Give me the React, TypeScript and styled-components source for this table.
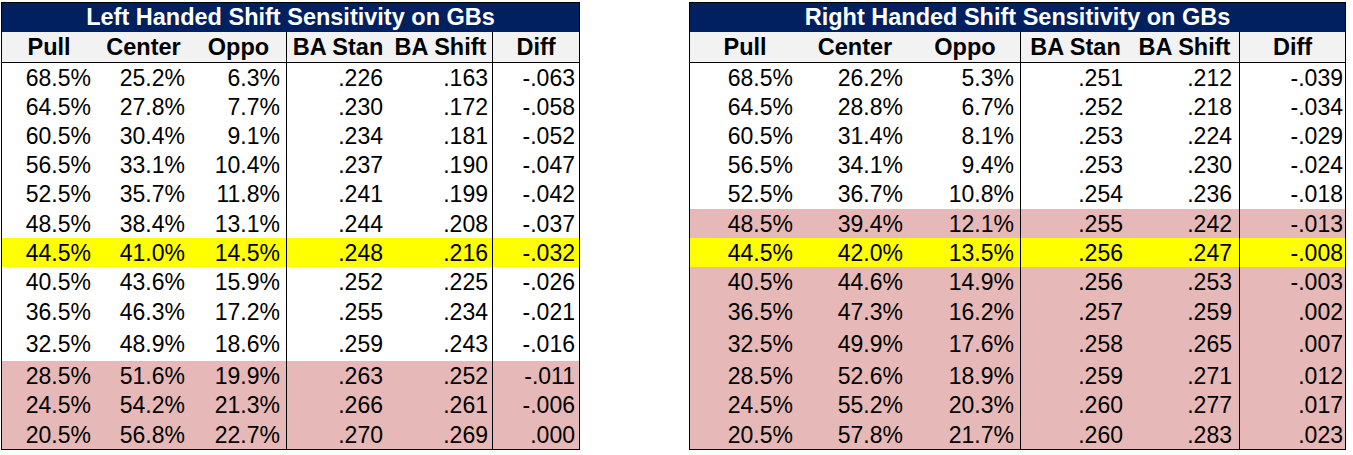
import React from "react";
import styled, { createGlobalStyle } from "styled-components";

const GlobalStyle = createGlobalStyle`
  html, body {
    margin: 0;
    padding: 0;
    background: #ffffff;
  }
  body {
    font-family: "Liberation Sans", Arial, sans-serif;
    color: #000000;
  }
  * { box-sizing: border-box; }
`;

type Fill = "none" | "yellow" | "pink";

const FILL: Record<Fill, string> = {
  none: "#ffffff",
  yellow: "#ffff00",
  pink: "#e6b8b7",
};

const Page = styled.div`
  display: flex;
  align-items: flex-start;
  gap: 109px;
  padding: 2px 0 0 1px;
`;

const Table = styled.div<{ $width: number }>`
  width: ${(p) => p.$width}px;
  border: 1px solid #000000;
  display: flex;
  flex-direction: column;
`;

const Title = styled.div`
  height: 29px;
  background: #002060;
  color: #ffffff;
  font-weight: 700;
  font-size: 23.5px;
  display: flex;
  align-items: center;
  justify-content: center;
  white-space: nowrap;
`;

const Row = styled.div<{ $cols: string; $height: number; $fill: Fill }>`
  display: grid;
  grid-template-columns: ${(p) => p.$cols};
  height: ${(p) => p.$height}px;
  background: ${(p) => FILL[p.$fill]};
`;

const HeaderRow = styled.div<{ $cols: string }>`
  display: grid;
  grid-template-columns: ${(p) => p.$cols};
  height: 31px;
  background: #f2f2f2;
  border-bottom: 1px solid #000000;
`;

const HeadCell = styled.div<{ $sep: boolean }>`
  display: flex;
  align-items: center;
  justify-content: center;
  font-weight: 700;
  font-size: 23.5px;
  padding-top: 1px;
  white-space: nowrap;
  border-right: ${(p) => (p.$sep ? "1px solid #000000" : "none")};
`;

const Cell = styled.div<{ $sep: boolean; $pad: number }>`
  display: flex;
  align-items: center;
  justify-content: flex-end;
  font-size: 23px;
  padding-top: 1px;
  white-space: nowrap;
  padding-right: ${(p) => p.$pad}px;
  border-right: ${(p) => (p.$sep ? "1px solid #000000" : "none")};
`;

const HEADERS = ["Pull", "Center", "Oppo", "BA Stan", "BA Shift", "Diff"];
const SEPS = [false, false, true, false, true, false];
const ROW_HEIGHTS = [29, 29, 29, 29, 30, 29, 29, 30, 30, 34, 29, 30, 29];

const LEFT_DATA = [
  ["68.5%", "25.2%", "6.3%", ".226", ".163", "-.063"],
  ["64.5%", "27.8%", "7.7%", ".230", ".172", "-.058"],
  ["60.5%", "30.4%", "9.1%", ".234", ".181", "-.052"],
  ["56.5%", "33.1%", "10.4%", ".237", ".190", "-.047"],
  ["52.5%", "35.7%", "11.8%", ".241", ".199", "-.042"],
  ["48.5%", "38.4%", "13.1%", ".244", ".208", "-.037"],
  ["44.5%", "41.0%", "14.5%", ".248", ".216", "-.032"],
  ["40.5%", "43.6%", "15.9%", ".252", ".225", "-.026"],
  ["36.5%", "46.3%", "17.2%", ".255", ".234", "-.021"],
  ["32.5%", "48.9%", "18.6%", ".259", ".243", "-.016"],
  ["28.5%", "51.6%", "19.9%", ".263", ".252", "-.011"],
  ["24.5%", "54.2%", "21.3%", ".266", ".261", "-.006"],
  ["20.5%", "56.8%", "22.7%", ".270", ".269", ".000"],
];

const RIGHT_DATA = [
  ["68.5%", "26.2%", "5.3%", ".251", ".212", "-.039"],
  ["64.5%", "28.8%", "6.7%", ".252", ".218", "-.034"],
  ["60.5%", "31.4%", "8.1%", ".253", ".224", "-.029"],
  ["56.5%", "34.1%", "9.4%", ".253", ".230", "-.024"],
  ["52.5%", "36.7%", "10.8%", ".254", ".236", "-.018"],
  ["48.5%", "39.4%", "12.1%", ".255", ".242", "-.013"],
  ["44.5%", "42.0%", "13.5%", ".256", ".247", "-.008"],
  ["40.5%", "44.6%", "14.9%", ".256", ".253", "-.003"],
  ["36.5%", "47.3%", "16.2%", ".257", ".259", ".002"],
  ["32.5%", "49.9%", "17.6%", ".258", ".265", ".007"],
  ["28.5%", "52.6%", "18.9%", ".259", ".271", ".012"],
  ["24.5%", "55.2%", "20.3%", ".260", ".277", ".017"],
  ["20.5%", "57.8%", "21.7%", ".260", ".283", ".023"],
];

const LEFT_FILLS: Fill[] = [
  "none", "none", "none", "none", "none", "none", "yellow",
  "none", "none", "none", "pink", "pink", "pink",
];
const RIGHT_FILLS: Fill[] = [
  "none", "none", "none", "none", "none", "pink", "yellow",
  "pink", "pink", "pink", "pink", "pink", "pink",
];

interface SheetProps {
  title: string;
  width: number;
  cols: number[];
  pads: number[];
  data: string[][];
  fills: Fill[];
}

function Sheet({ title, width, cols, pads, data, fills }: SheetProps) {
  const template = cols.map((c) => `${c}px`).join(" ");
  return (
    <Table $width={width}>
      <Title>{title}</Title>
      <HeaderRow $cols={template}>
        {HEADERS.map((h, i) => (
          <HeadCell key={h} $sep={SEPS[i]}>
            {h}
          </HeadCell>
        ))}
      </HeaderRow>
      {data.map((row, r) => (
        <Row key={r} $cols={template} $height={ROW_HEIGHTS[r]} $fill={fills[r]}>
          {row.map((v, c) => (
            <Cell key={c} $sep={SEPS[c]} $pad={pads[c]}>
              {v}
            </Cell>
          ))}
        </Row>
      ))}
    </Table>
  );
}

export default function App() {
  return (
    <>
      <GlobalStyle />
      <Page>
        <Sheet
          title="Left Handed Shift Sensitivity on GBs"
          width={579}
          cols={[94, 95, 96, 102, 104, 86]}
          pads={[5, 6, 6, 6, 4, 4]}
          data={LEFT_DATA}
          fills={LEFT_FILLS}
        />
        <Sheet
          title="Right Handed Shift Sensitivity on GBs"
          width={657}
          cols={[110, 110, 111, 109, 110, 105]}
          pads={[7, 7, 6, 7, 7, 2]}
          data={RIGHT_DATA}
          fills={RIGHT_FILLS}
        />
      </Page>
    </>
  );
}
